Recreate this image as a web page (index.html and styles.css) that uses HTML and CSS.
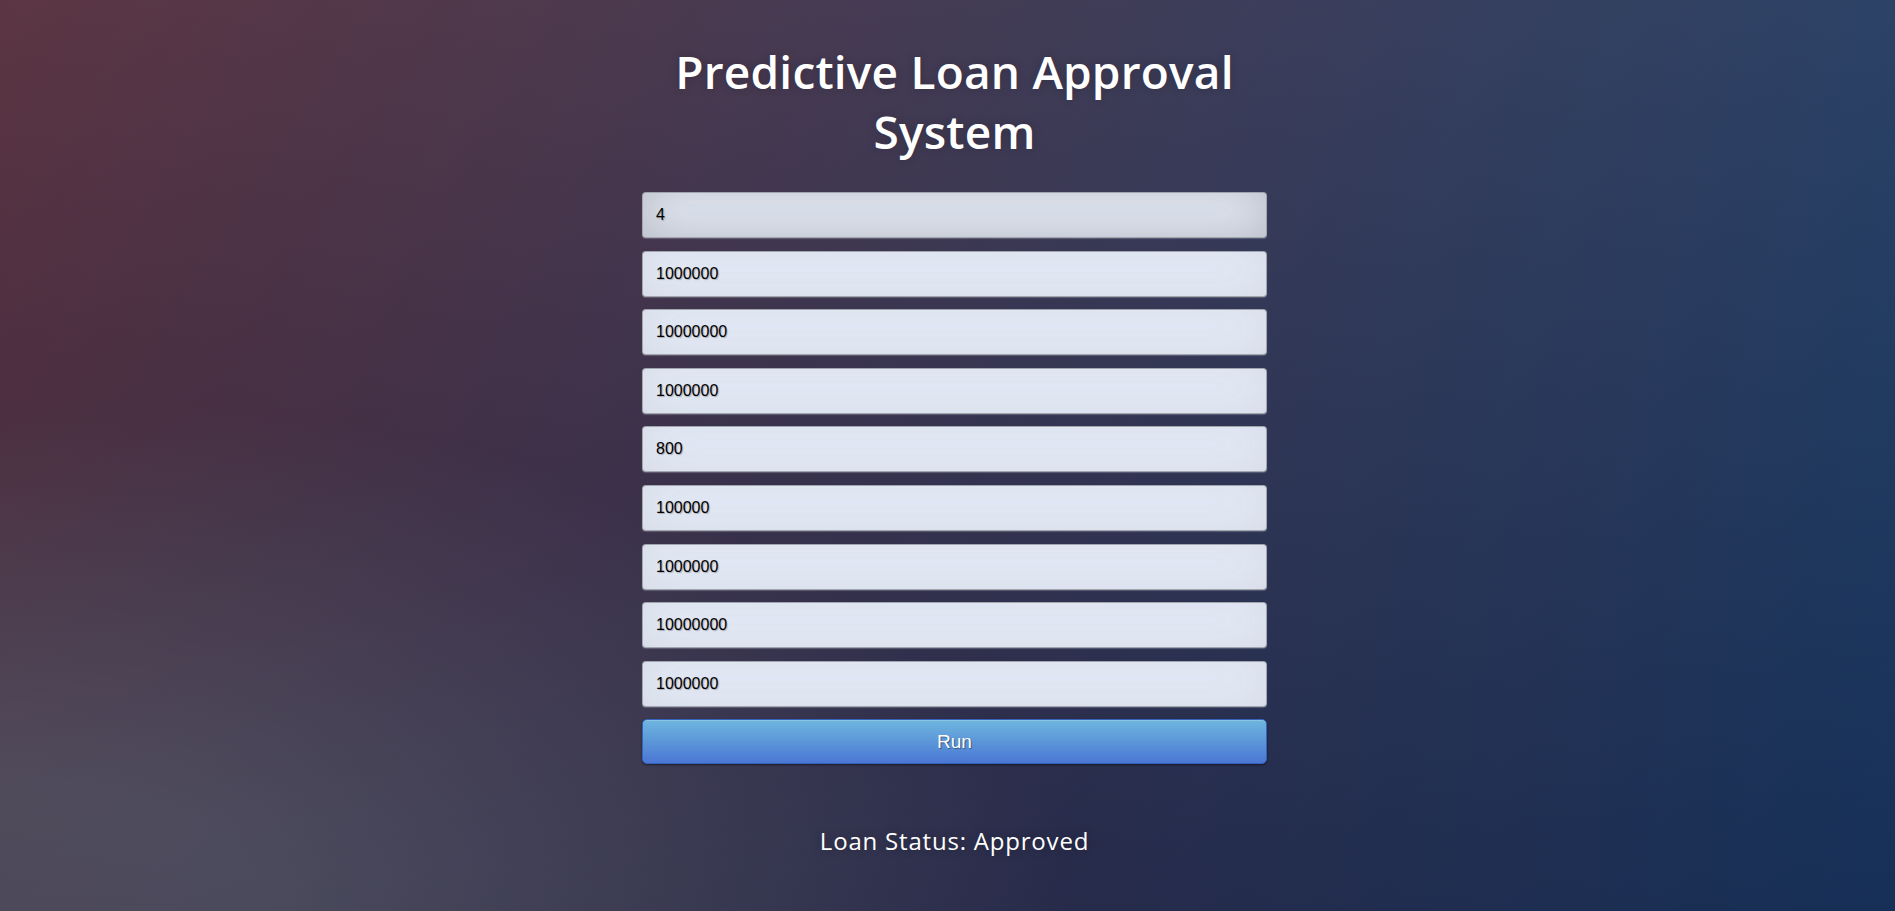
FILE: index.html
```html
<!DOCTYPE html>
<html lang="en">
<head>
<meta charset="utf-8">
<title>Predictive Loan Approval System</title>
<link rel="stylesheet" href="styles.css">
</head>
<body>
<div class="page">
  <div class="login">
    <h1 class="title">Predictive Loan Approval System</h1>
    <form class="form">
      <input class="field field-focus" type="text" value="4">
      <input class="field" type="text" value="1000000">
      <input class="field" type="text" value="10000000">
      <input class="field" type="text" value="1000000">
      <input class="field" type="text" value="800">
      <input class="field" type="text" value="100000">
      <input class="field" type="text" value="1000000">
      <input class="field" type="text" value="10000000">
      <input class="field" type="text" value="1000000">
      <button class="btn" type="button">Run</button>
    </form>
    <p class="status">Loan Status: Approved</p>
  </div>
</div>
</body>
</html>
```

FILE: styles.css
```css
* { box-sizing: border-box; }
html, body { margin: 0; padding: 0; height: 100%; }
body {
  font-family: "Open Sans", "DejaVu Sans", sans-serif;
  background: #092756;
  background:
    radial-gradient(ellipse at 0% 100%, rgba(104,128,138,.4) 10%, rgba(138,114,76,0) 40%),
    linear-gradient(to bottom, rgba(57,173,219,.25) 0%, rgba(42,60,87,.4) 100%),
    linear-gradient(135deg, #670d10 0%, #092756 100%);
  overflow: hidden;
}
.page {
  height: 100%;
  padding-left: 14px;
  display: flex;
  justify-content: center;
}
.login {
  width: 625px;
  display: flex;
  flex-direction: column;
  align-items: center;
}
.title {
  margin: 41px 0 0;
  width: 625px;
  color: #fff;
  font-size: 46px;
  font-weight: 600;
  line-height: 60px;
  letter-spacing: 0.2px;
  text-align: center;
  text-shadow: 0 0 10px rgba(0,0,0,0.2);
}
.form {
  width: 625px;
  margin-top: 31px;
  display: flex;
  flex-direction: column;
  gap: 12.6px;
}
.field {
  width: 100%;
  height: 46px;
  padding: 0 13px;
  font-family: "Liberation Sans", Arial, sans-serif;
  font-size: 16px;
  color: #000;
  text-shadow: 1px 1px 1px rgba(0,0,0,0.25);
  background: #e6ecf9;
  border: 1px solid rgba(0,0,0,0.3);
  border-radius: 4px;
  outline: none;
  box-shadow: inset 0 -5px 45px rgba(100,100,100,0.12), 0 1px 1px rgba(255,255,255,0.2);
}
.field-focus {
  box-shadow: inset 0 -5px 45px rgba(100,100,100,0.35), 0 1px 1px rgba(255,255,255,0.2);
}
.btn {
  width: 100%;
  height: 45px;
  font-family: "Liberation Sans", Arial, sans-serif;
  font-size: 19px;
  color: #fff;
  text-shadow: 1px 1px 1px rgba(0,0,0,0.4);
  background-color: #4a77d4;
  background-image: linear-gradient(to bottom, #6eb6de, #4a77d4);
  border: 1px solid #3762bc;
  border-radius: 5px;
  box-shadow: inset 0 1px 0 rgba(255,255,255,0.2), 0 1px 2px rgba(0,0,0,0.5);
  cursor: pointer;
}
.status {
  margin: 60px 0 0;
  color: #fff;
  font-size: 24px;
  letter-spacing: 0.8px;
  text-shadow: 0 0 10px rgba(0,0,0,0.3);
}
```
